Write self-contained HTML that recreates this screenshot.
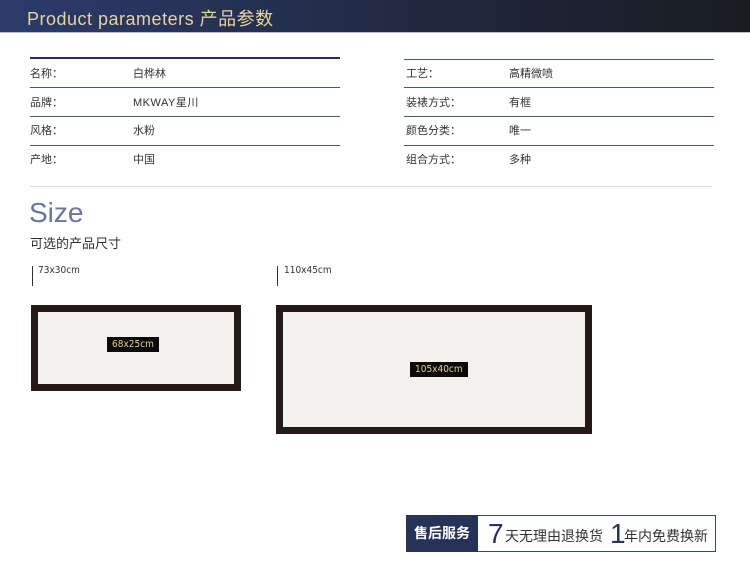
<!DOCTYPE html>
<html><head><meta charset="utf-8"><style>
*{margin:0;padding:0;box-sizing:border-box}
body{width:750px;height:579px;background:#fff;position:relative;overflow:hidden;font-family:"Liberation Sans","Noto Sans CJK SC",sans-serif;color:#333}
.hd{position:absolute;left:0;top:0;width:750px;height:33px;background:linear-gradient(90deg,#2b3b6c 0%,#222a44 50%,#191c22 100%);border-bottom:1px solid #bcc0c8}
.hd span{position:absolute;left:27px;top:5px;font-size:18px;color:#e6d3a0;letter-spacing:.5px}
.a{position:absolute}
.row{position:absolute;font-size:11px;color:#333}
.ln{position:absolute;height:1px;background:#4a5378}
.fr{position:absolute;background:#241a17;}
.fr div{position:absolute;background:#f3f1ed}
.lab{position:absolute;background:#0a0a0a;color:#e6d08a;font-family:"DejaVu Sans Condensed","Liberation Sans Narrow",sans-serif;font-size:10px;line-height:15px;padding:0 5px}
.dim{position:absolute;font-family:"DejaVu Sans Condensed",sans-serif;font-size:10px;color:#333}
.tick{position:absolute;width:1px;height:20px;background:#333}
</style></head><body>
<div class="hd"><span>Product parameters 产品参数</span></div>

<div class="a" style="left:30px;top:57px;width:310px;height:2px;background:#25305a"></div>
<div class="ln" style="left:30px;top:87px;width:310px"></div>
<div class="ln" style="left:30px;top:116px;width:310px"></div>
<div class="ln" style="left:30px;top:145px;width:310px"></div>
<div class="row" style="left:30px;top:65px">名称：</div><div class="row" style="left:133px;top:65px">白桦林</div>
<div class="row" style="left:30px;top:94px">品牌：</div><div class="row" style="left:133px;top:94px;letter-spacing:.5px">MKWAY星川</div>
<div class="row" style="left:30px;top:122px">风格：</div><div class="row" style="left:133px;top:122px">水粉</div>
<div class="row" style="left:30px;top:151px">产地：</div><div class="row" style="left:133px;top:151px">中国</div>

<div class="ln" style="left:404px;top:59px;width:310px"></div>
<div class="ln" style="left:404px;top:87px;width:310px"></div>
<div class="ln" style="left:404px;top:116px;width:310px"></div>
<div class="ln" style="left:404px;top:145px;width:310px"></div>
<div class="row" style="left:406px;top:65px">工艺：</div><div class="row" style="left:509px;top:65px">高精微喷</div>
<div class="row" style="left:406px;top:94px">装裱方式：</div><div class="row" style="left:509px;top:94px">有框</div>
<div class="row" style="left:406px;top:122px">颜色分类：</div><div class="row" style="left:509px;top:122px">唯一</div>
<div class="row" style="left:406px;top:151px">组合方式：</div><div class="row" style="left:509px;top:151px">多种</div>

<div class="a" style="left:30px;top:186px;width:682px;height:1px;background:#ddd"></div>
<div class="a" style="left:29px;top:197px;font-size:28px;color:#6a769c;font-weight:300">Size</div>
<div class="a" style="left:30px;top:233px;font-size:13px;color:#333">可选的产品尺寸</div>

<div class="tick" style="left:32px;top:266px"></div><div class="dim" style="left:38px;top:265px">73x30cm</div>
<div class="tick" style="left:277px;top:266px"></div><div class="dim" style="left:284px;top:265px">110x45cm</div>

<div class="fr" style="left:31px;top:305px;width:210px;height:86px"><div style="left:7px;top:7px;right:7px;bottom:7px"></div></div>
<div class="lab" style="left:107px;top:337px">68x25cm</div>
<div class="fr" style="left:276px;top:305px;width:316px;height:129px"><div style="left:7px;top:7px;right:7px;bottom:7px"></div></div>
<div class="lab" style="left:410px;top:362px">105x40cm</div>

<div class="a" style="left:406px;top:515px;width:310px;height:37px;border:1px solid #3a4770;background:#fff"></div>
<div class="a" style="left:406px;top:515px;width:72px;height:37px;background:#263258;color:#fff;font-size:14px;font-weight:bold;line-height:37px;text-align:center">售后服务</div>
<div class="a" style="left:488px;top:517px;font-size:28px;color:#263258;line-height:34px;font-weight:300">7</div>
<div class="a" style="left:505px;top:526px;font-size:14px;color:#333">天无理由退换货</div>
<div class="a" style="left:610px;top:517px;font-size:28px;color:#263258;line-height:34px;font-weight:300">1</div>
<div class="a" style="left:624px;top:526px;font-size:14px;color:#333">年内免费换新</div>
</body></html>
